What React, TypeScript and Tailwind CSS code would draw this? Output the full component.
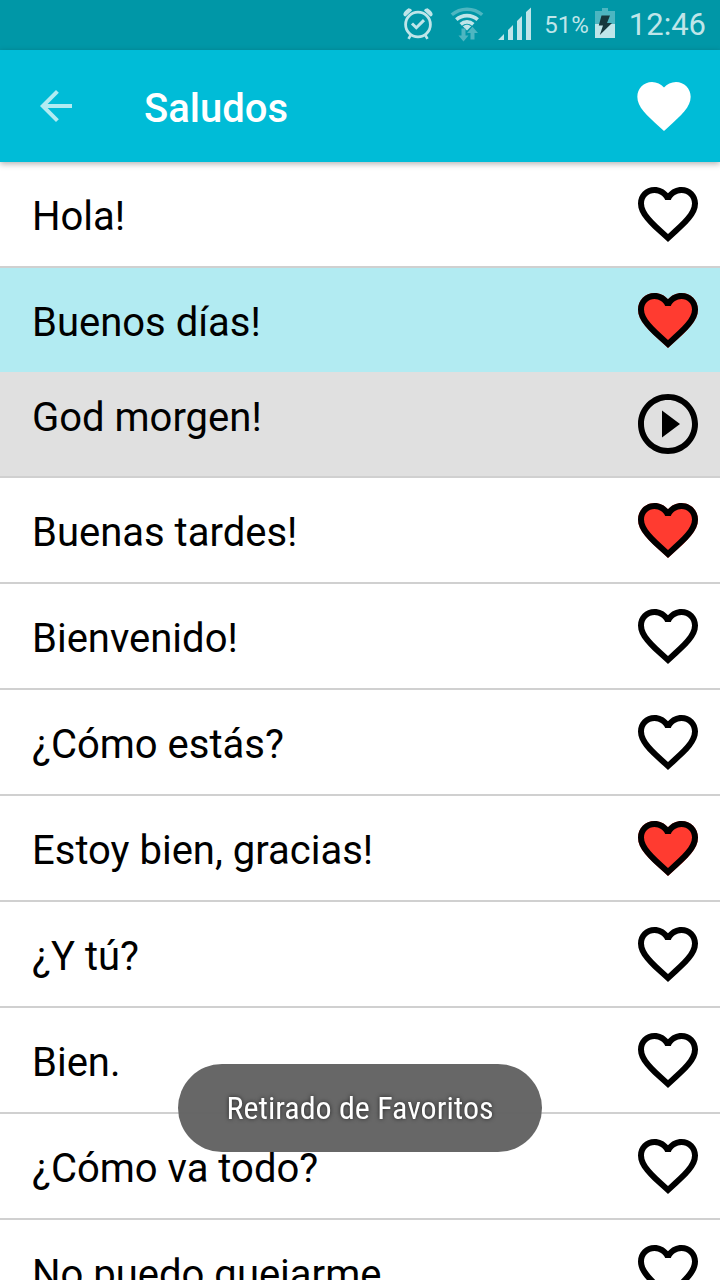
import { useState } from "react";

const HEART =
  "M12 21.35l-1.45-1.32C5.4 15.36 2 12.28 2 8.5 2 5.42 4.42 3 7.5 3c1.74 0 3.41.81 4.5 2.09C13.09 3.81 14.76 3 16.5 3 19.58 3 22 5.42 22 8.5c0 3.78-3.4 6.86-8.55 11.54L12 21.35z";
const HEART_OUTLINE =
  "M16.5 3c-1.74 0-3.41.81-4.5 2.09C10.91 3.81 9.24 3 7.5 3 4.42 3 2 5.42 2 8.5c0 3.78 3.4 6.86 8.55 11.54L12 21.35l1.45-1.32C18.6 15.36 22 12.28 22 8.5 22 5.42 19.58 3 16.5 3zm-4.4 15.55l-.1.1-.1-.1C7.14 14.24 4 11.39 4 8.5 4 6.5 5.5 5 7.5 5c1.54 0 3.04.99 3.57 2.36h1.87C13.46 5.99 14.96 5 16.5 5c2 0 3.5 1.5 3.5 3.5 0 2.89-3.14 5.74-7.9 10.05z";

function AlarmIcon() {
  return (
    <svg viewBox="402 0 32 50" className="h-[50px] w-8" fill="none" stroke="#bfe5e9" aria-hidden="true">
      <circle cx="418" cy="24.5" r="12.4" strokeWidth="2.8" />
      <path d="M412 23.500l4.300 4.200 7.700-7.600" strokeWidth="3" />
      <path d="M410.500 35.500l-2 3.300M425.500 35.500l2 3.300" strokeWidth="2.600" />
      <path d="M403.300 14.200q0.500-2.800 5.200-6l2.500 0.800 1 1.600-6.500 5.800-1.500-0.400zM432.700 14.200q-0.500-2.800-5.200-6l-2.500 0.800-1 1.600 6.500 5.800 1.500-0.400z" fill="#bfe5e9" stroke="none" />
    </svg>
  );
}

function WifiIcon() {
  return (
    <svg viewBox="451 0 36 50" className="h-[50px] w-9" fill="none" aria-hidden="true">
      <path d="M452.800 14.800c8.500-7.500 21.900-7.500 30.400 0" stroke="#4db6c1" strokeWidth="3.500" />
      <path d="M457.300 19.700c6-5.500 15.400-5.500 21.400 0M461.700 24.300c3.600-3.300 9-3.300 12.600 0" stroke="#bfe5e9" strokeWidth="3.600" />
      <path d="M463.800 26.200c2.500-2.100 5.900-2.100 8.400 0l-4.200 4.200z" fill="#bfe5e9" />
      <path d="M462.500 28.500h4v7h3l-5 6-5-6h3zM471.500 39.500h4v-6.500h3.500l-5.500-6.200-5.500 6.200h3.500z" fill="#4db6c1" />
    </svg>
  );
}

function SignalIcon() {
  return (
    <svg viewBox="498 0 34 50" className="h-[50px] w-[34px]" fill="#bfe5e9" aria-hidden="true">
      <path d="M498 40l6-6v6zM508 40v-10l5-5v15zM517 40v-19l5-5v24zM526 40v-28l5-4.500v32.500z" />
    </svg>
  );
}

function BatteryIcon() {
  return (
    <svg viewBox="594 0 20 50" className="h-[50px] w-5" aria-hidden="true">
      <path d="M594 11h7V8h6v3h7v13h-20z" fill="#4db6c1" />
      <path d="M594 24h20v14h-20z" fill="#bfe5e9" />
      <path d="M600.500 15.500h8.500l-3 7.500h5l-12.200 12 3.200-9.500h-4.200z" fill="#16383d" />
    </svg>
  );
}

function HeartIcon({ filled }: { filled: boolean }) {
  return (
    <svg viewBox="0 0 24 24" className="size-[72px]" aria-hidden="true">
      {filled && <path d={HEART} fill="#ff3b30" />}
      <path d={HEART_OUTLINE} fill="#000" />
    </svg>
  );
}

function PlayIcon() {
  return (
    <svg viewBox="0 0 24 24" className="size-[72px]" aria-hidden="true">
      <path d="M10 16.5l6-4.5-6-4.5v9zM12 2C6.480 2 2 6.480 2 12s4.480 10 10 10 10-4.480 10-10S17.520 2 12 2zm0 18c-4.410 0-8-3.590-8-8s3.590-8 8-8 8 3.590 8 8-3.590 8-8 8z" />
    </svg>
  );
}

type Phrase = { text: string; favorite: boolean; translation?: string };

const initialPhrases: Phrase[] = [
  { text: "Hola!", favorite: false },
  { text: "Buenos días!", favorite: true, translation: "God morgen!" },
  { text: "Buenas tardes!", favorite: true },
  { text: "Bienvenido!", favorite: false },
  { text: "¿Cómo estás?", favorite: false },
  { text: "Estoy bien, gracias!", favorite: true },
  { text: "¿Y tú?", favorite: false },
  { text: "Bien.", favorite: false },
  { text: "¿Cómo va todo?", favorite: false },
  { text: "No puedo quejarme", favorite: false },
];

export default function App() {
  const [phrases, setPhrases] = useState(initialPhrases);
  const toggle = (index: number) =>
    setPhrases(phrases.map((p, i) => (i === index ? { ...p, favorite: !p.favorite } : p)));

  return (
    <div className="flex h-screen flex-col overflow-hidden bg-white font-['Roboto',sans-serif] text-black">
      <div className="flex h-[50px] shrink-0 items-center justify-end bg-[#0097a7] pr-3.5 text-[#bfe5e9]">
        <AlarmIcon />
        <div className="ml-4 flex"><WifiIcon /></div>
        <div className="ml-3 flex"><SignalIcon /></div>
        <span className="ml-3 text-2xl">51%</span>
        <div className="ml-1.5 flex"><BatteryIcon /></div>
        <span className="ml-3.5 text-[31px] leading-[50px]">12:46</span>
      </div>

      <header className="relative z-10 flex h-28 shrink-0 items-center bg-[#00bcd7] pr-6 pl-8 shadow-[0_2px_6px_rgba(0,0,0,0.3)]">
        <button type="button" aria-label="Volver">
          <svg viewBox="0 0 24 24" className="size-12" fill="#b2ebf2" aria-hidden="true">
            <path d="M20 11H7.830l5.590-5.590L12 4l-8 8 8 8 1.410-1.410L7.830 13H20v-2z" />
          </svg>
        </button>
        <h1 className="ml-16 flex-1 pt-1.5 text-[40px] leading-[48px] font-medium text-white">Saludos</h1>
        <button type="button" aria-label="Favoritos">
          <svg viewBox="0 0 24 24" className="size-16" fill="#fff" aria-hidden="true">
            <path d={HEART} />
          </svg>
        </button>
      </header>

      <main className="min-h-0 flex-1 overflow-hidden">
        <ul>
          {phrases.map((p, i) => (
            <li key={p.text} className="border-b-2 border-[#d0d0d0] text-[40px] leading-[48px]">
              <div className={p.translation ? "flex h-[104px] items-center bg-[#b2ebf2] pr-4 pl-8" : "flex h-[104px] items-center pr-4 pl-8"}>
                <span className="flex-1 pt-1.5">{p.text}</span>
                <button type="button" aria-label={`Favorito: ${p.text}`} aria-pressed={p.favorite} onClick={() => toggle(i)}>
                  <HeartIcon filled={p.favorite} />
                </button>
              </div>
              {p.translation && (
                <div className="flex h-[104px] items-center bg-[#e0e0e0] pr-4 pl-8">
                  <span className="flex-1 pb-3">{p.translation}</span>
                  <button type="button" aria-label="Reproducir">
                    <PlayIcon />
                  </button>
                </div>
              )}
            </li>
          ))}
        </ul>
      </main>

      <div role="status" className="pointer-events-none fixed inset-x-0 bottom-32 z-20 flex justify-center">
        <div className="rounded-full bg-[#646464]/98 px-12 py-5 font-['Roboto_Condensed','Roboto',sans-serif] text-[32px] leading-[48px] text-white [text-shadow:0_0_4px_rgba(0,0,0,0.7)]">
          Retirado de Favoritos
        </div>
      </div>
    </div>
  );
}
